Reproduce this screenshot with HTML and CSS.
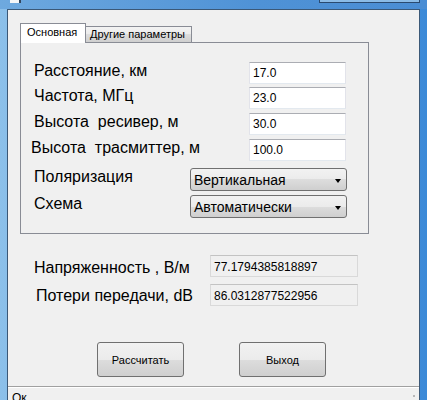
FILE: index.html
```html
<!DOCTYPE html>
<html lang="ru">
<head>
<meta charset="utf-8">
<title>Расчет</title>
<link rel="stylesheet" href="styles.css">
</head>
<body>
<div class="window">
  <div class="titlebar">
    <div class="app-icon"></div>
    <div class="caption-buttons"></div>
  </div>
  <div class="client">
    <div class="tabs">
      <div class="tab active">Основная</div>
      <div class="tab">Другие параметры</div>
    </div>
    <div class="panel">
      <div class="row">
        <span class="lbl">Расстояние, км</span>
        <div class="input">17.0</div>
      </div>
      <div class="row r2">
        <span class="lbl">Частота, МГц</span>
        <div class="input">23.0</div>
      </div>
      <div class="row r3">
        <span class="lbl">Высота  ресивер, м</span>
        <div class="input">30.0</div>
      </div>
      <div class="row r3">
        <span class="lbl shifted">Высота  трасмиттер, м</span>
        <div class="input">100.0</div>
      </div>
      <div class="row combo-row first">
        <span class="lbl short">Поляризация</span>
        <div class="combo"><span>Вертикальная</span><i class="arrow"></i></div>
      </div>
      <div class="row combo-row">
        <span class="lbl short">Схема</span>
        <div class="combo"><span>Автоматически</span><i class="arrow"></i></div>
      </div>
    </div>
    <div class="result first">
      <span class="rlbl">Напряженность , В/м</span>
      <div class="rbox">77.1794385818897</div>
    </div>
    <div class="result second">
      <span class="rlbl">Потери передачи, dB</span>
      <div class="rbox">86.0312877522956</div>
    </div>
    <div class="buttons">
      <button class="btn">Рассчитать</button>
      <button class="btn">Выход</button>
    </div>
    <div class="statusbar">
      <span class="status-text">Ок</span>
      <i class="grip"></i>
    </div>
  </div>
</div>
</body>
</html>
```
FILE: styles.css
```css
html, body {
  margin: 0;
  padding: 0;
}
body {
  width: 427px;
  height: 400px;
  overflow: hidden;
  font-family: "Liberation Sans", Arial, sans-serif;
  color: #000;
}
.window {
  height: 400px;
  display: flex;
  flex-direction: column;
  background: linear-gradient(to right, #8cc0ea 0%, #6aa6df 30%, #5a9ad9 70%, #3c8ad8 100%);
}
.titlebar {
  height: 9px;
  flex: none;
  display: flex;
  align-items: flex-start;
  background: linear-gradient(to right, #6ea9df, #4f92d6 60%, #4a8dd4);
}
.app-icon {
  margin-left: 10px;
  width: 9px;
  height: 3px;
  background: #f4f6f8;
  border-right: 2px solid #33475e;
}
.caption-buttons {
  margin-left: auto;
  margin-right: 7px;
  width: 99px;
  height: 2px;
  background: #8bbbe6;
  border: 1px solid #2a4a70;
  border-top: none;
}
.client {
  flex: 1;
  margin: 0 7px;
  background: #f0f0f0;
  border: 1px solid #3b5877;
  border-bottom: none;
  display: flex;
  flex-direction: column;
  min-height: 0;
  overflow: hidden;
}
.tabs {
  display: flex;
  align-items: flex-end;
  margin-top: 13px;
  padding-left: 12px;
  height: 19px;
  font-size: 11px;
  line-height: 15px;
}
.tab {
  box-sizing: border-box;
  height: 16px;
  width: 106px;
  padding-left: 4px;
  border: 1px solid #898c95;
  border-left: none;
  border-bottom: none;
  background: linear-gradient(#f3f3f3, #ebebeb 50%, #dddddd 50%, #cfcfcf);
  white-space: nowrap;
}
.tab.active {
  width: 66px;
  height: 20px;
  padding-left: 6px;
  padding-top: 1px;
  border-left: 1px solid #898c95;
  background: #fff;
  margin-bottom: -1px;
  position: relative;
  z-index: 1;
}
.panel {
  box-sizing: border-box;
  margin-left: 12px;
  width: 349px;
  height: 192px;
  border: 1px solid #898c95;
  padding-top: 19px;
}
.row {
  display: flex;
  height: 22px;
}
.row.r2 { margin-top: 3px; }
.row.r3 { margin-top: 4px; }
.row.combo-row { height: 23px; margin-top: 4px; }
.row.combo-row.first { margin-top: 7px; }
.lbl {
  box-sizing: border-box;
  width: 228px;
  padding-left: 13px;
  font-size: 16px;
  line-height: 18px;
  white-space: pre;
}
.lbl.shifted { padding-left: 10px; }
.lbl.short { width: 169px; }
.combo-row .lbl { line-height: 17px; }
.input {
  box-sizing: border-box;
  width: 97px;
  height: 22px;
  background: #fff;
  border: 1px solid #e2e3ea;
  border-top-color: #abadb3;
  border-bottom-color: #e3e9ef;
  padding-left: 3px;
  font-size: 12px;
  line-height: 20px;
}
.combo {
  box-sizing: border-box;
  width: 157px;
  height: 23px;
  border: 1px solid #707070;
  border-radius: 3px;
  background: linear-gradient(#f2f2f2, #ebebeb 50%, #dddddd 50%, #cfcfcf);
  display: flex;
  align-items: flex-start;
  padding: 1px 5px 0 3px;
  font-size: 14px;
  line-height: 21px;
}
.combo span { flex: 1; white-space: nowrap; }
.arrow {
  align-self: center;
  width: 0;
  height: 0;
  border-left: 3.5px solid transparent;
  border-right: 3.5px solid transparent;
  border-top: 4px solid #000;
  margin-top: 1px;
}
.result {
  display: flex;
  height: 22px;
}
.result.first { margin-top: 21px; }
.result.second { margin-top: 7px; }
.rlbl {
  box-sizing: border-box;
  width: 202px;
  padding-left: 26px;
  padding-top: 2px;
  font-size: 16px;
  line-height: 22px;
  white-space: pre;
}
.result.second .rlbl { padding-left: 28px; padding-top: 1px; }
.rbox {
  box-sizing: border-box;
  width: 148px;
  height: 22px;
  background: #f0f0f0;
  border: 1px solid #d9d9d9;
  border-top-color: #c3c3c3;
  padding: 1px 0 0 3px;
  font-size: 12px;
  line-height: 20px;
}
.buttons {
  display: flex;
  gap: 55px;
  margin-top: 36px;
  padding-left: 89px;
}
.btn {
  box-sizing: border-box;
  width: 87px;
  height: 35px;
  margin: 0;
  padding: 0;
  border: 1px solid #707070;
  border-radius: 3px;
  background: linear-gradient(#f2f2f2, #ebebeb 50%, #dddddd 50%, #cfcfcf);
  font-family: "Liberation Sans", Arial, sans-serif;
  font-size: 11px;
  color: #000;
}
.statusbar {
  margin-top: auto;
  flex: none;
  box-sizing: border-box;
  height: 14px;
  border-top: 1px solid #a0a0a0;
  background: #f0f0f0;
  display: flex;
  align-items: flex-start;
  padding: 0 0 0 4px;
  font-size: 12px;
  line-height: 15px;
  box-shadow: inset 0 1px 0 #ffffff;
}
.status-text {
  display: block;
  margin-top: 4px;
  white-space: nowrap;
}
.grip {
  margin-left: auto;
  margin-right: 4px;
  margin-top: 8px;
  width: 2px;
  height: 2px;
  background: #b8b8b8;
}
```
